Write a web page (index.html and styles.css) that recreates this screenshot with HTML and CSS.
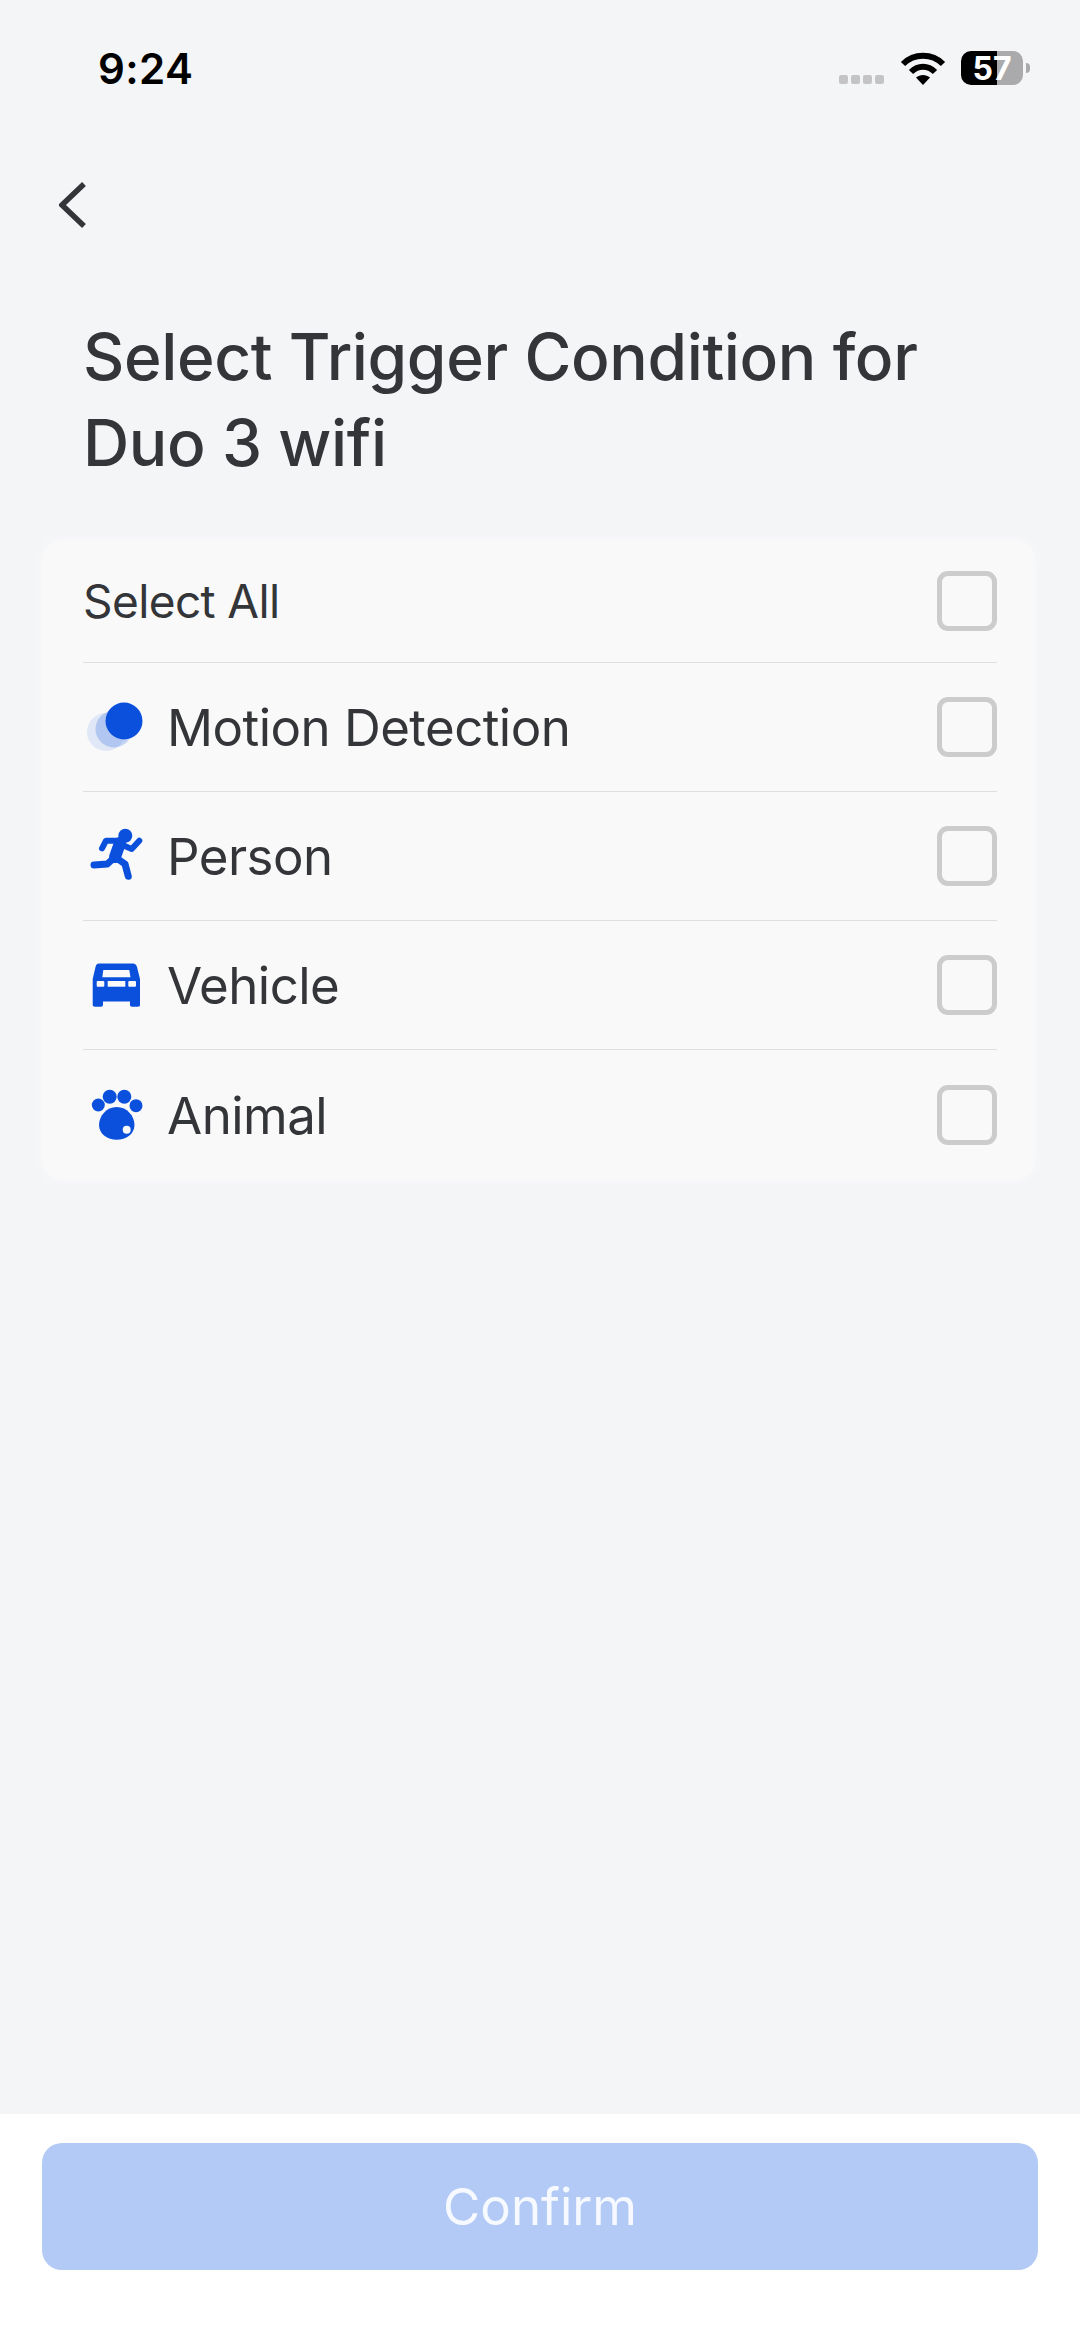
FILE: index.html
```html
<!DOCTYPE html>
<html lang="en">
<head>
    <meta charset="UTF-8">
    <meta name="viewport" content="width=device-width, initial-scale=1.0">
    <title>Select Trigger Condition</title>
    <link rel="stylesheet" href="styles.css">
</head>
<body>
    <div class="status-bar">
        <span class="time">9:24</span>
        <div class="status-icons">
            <div class="signal-dots"><i></i><i></i><i></i><i></i></div>
            <svg class="wifi" width="46" height="34" viewBox="0 0 46 34">
                <path d="M3 13C14 2 32 2 43 13" fill="none" stroke="#000" stroke-width="6"/>
                <path d="M11 21C18 14 28 14 35 21" fill="none" stroke="#000" stroke-width="6"/>
                <path d="M16 26.500C20 23 26 23 30 26.500L23 34Z" fill="#000"/>
            </svg>
            <div class="battery">
                <div class="battery-body"><span class="battery-level">57</span></div>
                <div class="battery-nub"></div>
            </div>
        </div>
    </div>

    <div class="nav">
        <svg width="27" height="46" viewBox="0 0 27 46">
            <path d="M25 2L3 23L25 44" fill="none" stroke="#333538" stroke-width="5.500"/>
        </svg>
    </div>

    <h1 class="title">Select Trigger Condition for<br>Duo 3 wifi</h1>

    <div class="card">
        <div class="row row-all">
            <span class="label-all">Select All</span>
            <div class="checkbox"></div>
        </div>
        <div class="row">
            <svg class="icon" width="60" height="60" viewBox="0 0 60 60">
                <defs><clipPath id="motionClip"><rect width="60" height="54"/></clipPath></defs>
                <g clip-path="url(#motionClip)" fill="#0b50dc">
                    <circle cx="23" cy="35" r="19" opacity="0.1"/>
                    <circle cx="31" cy="32" r="18.500" opacity="0.22"/>
                    <circle cx="41" cy="24" r="18.500"/>
                </g>
            </svg>
            <span class="label">Motion Detection</span>
            <div class="checkbox"></div>
        </div>
        <div class="row">
            <svg class="icon" width="60" height="60" viewBox="0 0 60 60">
                <circle cx="42.300" cy="9.700" r="7" fill="#0b50dc"/>
                <g fill="none" stroke="#0b50dc" stroke-linecap="round" stroke-linejoin="round">
                    <path d="M37 18L48.700 23L56.300 14.700" stroke-width="6"/>
                    <path d="M37 14.700L23 14.700L19 22.300" stroke-width="6"/>
                    <path d="M37 17L32 31" stroke-width="12"/>
                    <path d="M32 31L24.300 38L11 39" stroke-width="7"/>
                    <path d="M32 31L42 38L45.300 50.300" stroke-width="7"/>
                </g>
            </svg>
            <span class="label">Person</span>
            <div class="checkbox"></div>
        </div>
        <div class="row">
            <svg class="icon" width="60" height="60" viewBox="0 0 60 60">
                <path d="M16 8.500H50C52 8.500 53.500 10 54 12L57 24V50C57 51 56.200 51.700 55 51.700H49C47.800 51.700 47 51 47 50V46.500H20V50C20 51 19.200 51.700 18 51.700H12C10.800 51.700 9.700 51 9.700 50V24L12.500 12C13 10 14 8.500 16 8.500Z" fill="#0b50dc"/>
                <path d="M20.300 15H46.300L47.500 22.300H19.300Z" fill="#f9f9fa"/>
                <rect x="13.700" y="26" width="7.600" height="5.700" rx="1" fill="#f9f9fa"/>
                <rect x="24.700" y="26" width="17.600" height="5.700" fill="#f9f9fa"/>
                <rect x="45.300" y="26" width="7.700" height="5.700" rx="1" fill="#f9f9fa"/>
            </svg>
            <span class="label">Vehicle</span>
            <div class="checkbox"></div>
        </div>
        <div class="row">
            <svg class="icon" width="60" height="60" viewBox="0 0 60 60">
                <g fill="#0b50dc">
                    <circle cx="15.300" cy="20" r="6.500"/>
                    <circle cx="26.700" cy="11.700" r="7"/>
                    <circle cx="41.300" cy="11.700" r="7"/>
                    <circle cx="53" cy="20.700" r="6.500"/>
                    <path d="M33.700 22C44 22 51.500 31 51.500 40C51.500 49 43 54.800 33.700 54.800C24.500 54.800 16 49 16 40C16 31 23.500 22 33.700 22Z"/>
                </g>
                <circle cx="43.700" cy="44.700" r="4" fill="#f9f9fa"/>
            </svg>
            <span class="label">Animal</span>
            <div class="checkbox"></div>
        </div>
    </div>

    <div class="footer">
        <button class="confirm">Confirm</button>
    </div>
</body>
</html>
```

FILE: styles.css
```css
body {
    font-family: Inter, "Liberation Sans", sans-serif;
    margin: 0;
    padding: 0;
    width: 1080px;
    height: 2337px;
    overflow: hidden;
    display: flex;
    flex-direction: column;
    background-color: #f4f5f7;
    color: #333538;
}
.status-bar {
    height: 136px;
    display: flex;
    align-items: center;
    justify-content: space-between;
    padding: 0 50px 0 98px;
    flex-shrink: 0;
}
.time {
    font-size: 42px;
    font-weight: 600;
    letter-spacing: 0.4px;
    color: #000;
}
.status-icons {
    display: flex;
    align-items: center;
}
.signal-dots {
    display: flex;
    gap: 3px;
    margin: 22px 16px 0 0;
}
.signal-dots i {
    width: 9px;
    height: 9px;
    border-radius: 2px;
    background-color: #c4c4c6;
}
.wifi {
    margin-right: 15px;
}
.battery {
    display: flex;
    align-items: center;
    gap: 3px;
}
.battery-body {
    width: 62px;
    height: 34px;
    border-radius: 10px;
    background: linear-gradient(to right, #000 36px, #aaaaac 36px);
    display: flex;
    align-items: center;
    justify-content: center;
}
.battery-level {
    font-size: 32px;
    font-weight: 700;
    color: #fff;
}
.battery-nub {
    width: 4px;
    height: 10px;
    border-radius: 0 4px 4px 0;
    background-color: #aaaaac;
}
.nav {
    height: 138px;
    display: flex;
    align-items: center;
    padding-left: 59px;
    flex-shrink: 0;
}
.title {
    margin: 40px 0 54px 83px;
    font-size: 64px;
    font-weight: 500;
    letter-spacing: -0.37px;
    line-height: 86px;
}
.card {
    margin: 0 45px 0 42px;
    padding: 0 38px 0 41px;
    background-color: #f9f9fa;
    border-radius: 20px;
    box-shadow: 0 0 12px #f9f9fa;
}
.row {
    height: 129px;
    display: flex;
    align-items: center;
    border-bottom: 1px solid #dfdfe0;
    box-sizing: border-box;
}
.row:last-child {
    border-bottom: none;
    height: 130px;
}
.row-all {
    height: 123px;
}
.icon {
    margin-right: 24px;
    flex-shrink: 0;
}
.label-all {
    font-size: 46px;
    letter-spacing: -0.6px;
}
.label {
    font-size: 51px;
    letter-spacing: -0.55px;
}
.checkbox {
    width: 60px;
    height: 60px;
    margin-left: auto;
    box-sizing: border-box;
    border: 5px solid #cccccc;
    border-radius: 11px;
}
.footer {
    margin-top: auto;
    height: 223px;
    box-sizing: border-box;
    padding: 29px 42px 0;
    background-color: #fff;
    flex-shrink: 0;
}
.confirm {
    width: 100%;
    height: 127px;
    border: none;
    border-radius: 20px;
    background-color: #b2caf5;
    color: #f6f9ff;
    font-family: inherit;
    font-size: 51px;
}
```
